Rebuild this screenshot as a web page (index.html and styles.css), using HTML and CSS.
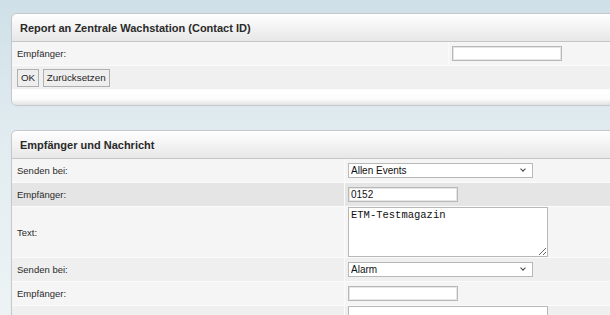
FILE: index.html
```html
<!DOCTYPE html>
<html lang="de">
<head>
    <meta charset="UTF-8">
    <title>Contact ID</title>
    <link rel="stylesheet" href="styles.css">
</head>
<body>
    <div class="panel">
        <div class="panel_kopf">Report an Zentrale Wachstation (Contact ID)</div>
        <table class="formular formular_eins">
            <tr class="zeile_hell">
                <td class="label">Empfänger:</td>
                <td class="wert"><input type="text" class="feld"></td>
            </tr>
            <tr class="zeile_knopf">
                <td colspan="2" class="knoepfe">
                    <button type="button">OK</button>
                    <button type="button">Zurücksetzen</button>
                </td>
            </tr>
        </table>
        <div class="panel_fuss"></div>
    </div>

    <div class="panel">
        <div class="panel_kopf">Empfänger und Nachricht</div>
        <table class="formular formular_zwei">
            <tr class="zeile_hell">
                <td class="label">Senden bei:</td>
                <td class="wert">
                    <span class="auswahl"><select><option>Allen Events</option></select></span>
                </td>
            </tr>
            <tr class="zeile_aktiv">
                <td class="label">Empfänger:</td>
                <td class="wert"><input type="text" class="feld" value="0152"></td>
            </tr>
            <tr class="zeile_hell">
                <td class="label">Text:</td>
                <td class="wert wert_text"><textarea>ETM-Testmagazin</textarea></td>
            </tr>
            <tr class="zeile_dunkel">
                <td class="label">Senden bei:</td>
                <td class="wert">
                    <span class="auswahl"><select><option>Alarm</option></select></span>
                </td>
            </tr>
            <tr class="zeile_hell">
                <td class="label">Empfänger:</td>
                <td class="wert"><input type="text" class="feld"></td>
            </tr>
            <tr class="zeile_dunkel">
                <td class="label label_oben">Text:</td>
                <td class="wert wert_text"><textarea></textarea></td>
            </tr>
        </table>
    </div>
</body>
</html>
```

FILE: styles.css
```css
html, body {
    margin: 0;
    height: 100%;
    overflow: hidden;
}

body {
    background: linear-gradient(to bottom, #cfe0e8 0px, #e2ecf0 140px, #edf3f5 315px);
    font-family: "Liberation Sans", Arial, sans-serif;
    color: #333;
    padding-top: 13px;
}

.panel {
    margin-left: 11px;
    width: 640px;
    border: 1px solid #c6c9cb;
    border-radius: 6px;
    background-color: #f5f5f5;
    margin-bottom: 24px;
    overflow: hidden;
    box-shadow: 0 0 1px rgba(0, 0, 0, 0.08);
}

.panel_kopf {
    height: 27px;
    line-height: 28px;
    padding-left: 8px;
    font-size: 11px;
    font-weight: bold;
    color: #2a2a2a;
    background: linear-gradient(to bottom, #ffffff, #e7e7e7);
    border-bottom: 1px solid #c6c6c6;
}

.panel_fuss {
    height: 15px;
    background: linear-gradient(to bottom, #ffffff 0px, #fcfcfc 9px, #e2e2e2 15px);
}

.formular {
    width: 100%;
    border-collapse: collapse;
    font-size: 9.5px;
    color: #2b2b2b;
}

.formular tr {
    border-bottom: 1px solid #fbfbfb;
}

.formular td {
    height: 23px;
    padding: 0 4px 0 5px;
    vertical-align: middle;
}

.formular .wert {
    padding-left: 3px;
    border-left: 1px solid #fbfbfb;
}

.formular_eins .label {
    width: 427px;
}

.formular_zwei .label {
    width: 323px;
}

.label_oben {
    vertical-align: top !important;
    padding-top: 20px !important;
}

.zeile_hell { background-color: #f5f5f5; }
.zeile_dunkel { background-color: #efefef; }
.zeile_aktiv { background-color: #e5e5e5; }
.zeile_knopf { background-color: #f0f0f0; }

.knoepfe {
    padding-top: 1px;
}

.knoepfe button {
    height: 18px;
    padding: 0 3px;
    margin: 0 1px 0 0;
    font-family: "Liberation Sans", Arial, sans-serif;
    font-size: 9.8px;
    color: #1e1e1e;
    background-color: #eeeeee;
    border: 1px solid #b0b0b0;
    border-radius: 0;
}

.feld {
    box-sizing: border-box;
    width: 110px;
    height: 15px;
    margin: 0;
    padding: 0 2px;
    font-family: "Liberation Sans", Arial, sans-serif;
    font-size: 10px;
    color: #111;
    background-color: #fff;
    border: 1px solid #b8b8b8;
    box-shadow: inset 0 0 0 1px #e6e6e6;
}

.auswahl {
    position: relative;
    display: inline-block;
}

.auswahl select {
    appearance: none;
    box-sizing: border-box;
    width: 185px;
    height: 15px;
    margin: 0;
    padding: 0 2px;
    font-family: "Liberation Sans", Arial, sans-serif;
    font-size: 10px;
    color: #111;
    background-color: #fff;
    border: 1px solid #b8b8b8;
    border-radius: 0;
    display: block;
}

.auswahl::after {
    content: "";
    position: absolute;
    right: 8px;
    top: 4px;
    width: 3px;
    height: 3px;
    border-right: 1.5px solid #444;
    border-bottom: 1.5px solid #444;
    transform: rotate(45deg);
}

.wert_text {
    vertical-align: top !important;
}

.formular textarea {
    box-sizing: border-box;
    display: block;
    width: 200px;
    height: 50px;
    margin: 0;
    padding: 1px 2px;
    font-family: "Liberation Mono", "Courier New", monospace;
    font-size: 10.5px;
    color: #111;
    background-color: #fff;
    border: 1px solid #b8b8b8;
}
```
